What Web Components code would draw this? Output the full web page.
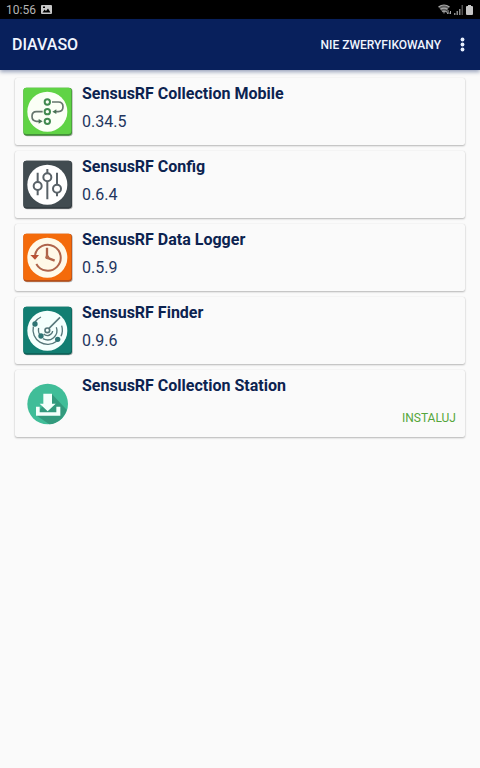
<!DOCTYPE html>
<html lang="pl">
<head>
<meta charset="utf-8">
<meta name="viewport" content="width=device-width, initial-scale=1">
<title>DIAVASO</title>
<style>
  body { margin: 0; background: #fafafa; color: #0c2350; font-family: Roboto, "Liberation Sans", sans-serif; }
</style>
</head>
<body>
<diavaso-app></diavaso-app>
<script>
const define = (name, html) => customElements.define(name, class extends HTMLElement {
  constructor() {
    super();
    this.attachShadow({ mode: "open" }).innerHTML = html;
  }
});

define("status-bar", `
<style>
  :host { display: flex; align-items: center; justify-content: space-between; height: 19px; padding: 0 7px 0 6px; background: #000; color: #b4b4b4; font-size: 12px; line-height: 20px; }
  div { display: flex; align-items: center; gap: 5px; }
  .right { gap: 2px; }
  svg { display: block; }
</style>
<div><time>10:56</time>
  <svg width="11" height="9" viewBox="0 0 11 9"><path fill="#c8c8c8" fill-rule="evenodd" d="M1 0h9q1 0 1 1v7q0 1-1 1H1Q0 9 0 8V1Q0 0 1 0ZM1.5 7.5h8L7 3.5 5 6 3.500 4.500ZM2 1.500v1.500h2V1.500Z"/></svg>
</div>
<div class="right">
  <svg width="14" height="11" viewBox="0 0 14 11"><path d="M.5 3Q6 -1 11.500 3L6 10Z" fill="#5c5c5c"/><path d="M.5 3Q6 -1 11.500 3M2.500 5.300Q6 2.800 9.500 5.300M4.300 7.600Q6 6.500 7.700 7.600" fill="none" stroke="#aaa" stroke-width="1.200"/><path d="M8 7l2 3V6M12.500 7v3l-1.500-1.500" fill="none" stroke="#aaa"/></svg>
  <svg width="10" height="10" viewBox="0 0 10 10"><path d="M0 8h1.500v2H0zM2.500 6H4v4H2.500zM5 4h1.500v6H5z" fill="#888"/><path d="M7.500 0H9v10H7.500z" fill="#505050"/></svg>
  <svg width="7" height="10" viewBox="0 0 7 10"><path d="M2 0h3v1h1q1 0 1 1v7q0 1-1 1H1Q0 10 0 9V2q0-1 1-1h1Z" fill="#c6c6c6"/></svg>
</div>`);

define("app-bar", `
<style>
  :host { display: flex; align-items: center; height: 51px; padding: 0 6px 0 12px; background: #08205c; color: #f0f5ff; box-shadow: 0 2px 4px #08205c66; }
  h1 { flex: 1; margin: 0; font-size: 16px; line-height: 24px; font-weight: 500; }
  button { display: block; padding: 0; border: 0; background: none; color: inherit; font: 500 12px/24px Roboto, "Liberation Sans", sans-serif; cursor: pointer; }
  .menu { margin-left: 9px; }
  svg { display: block; }
</style>
<h1><slot></slot></h1>
<button type="button">NIE ZWERYFIKOWANY</button>
<button type="button" class="menu" aria-label="Menu"><svg width="24" height="24" viewBox="0 0 24 24" fill="#e8f0ff"><circle cx="12.500" cy="6.500" r="1.900"/><circle cx="12.500" cy="11.500" r="1.900"/><circle cx="12.500" cy="16.500" r="1.900"/></svg></button>`);

const tile = (fill, edge, disc, art) => `
  <rect x="41" y="50" width="146" height="144" rx="10" fill="#777" opacity=".55"/>
  <rect x="39" y="48" width="146" height="144" rx="10" fill="${edge}"/>
  <rect x="39" y="48" width="144" height="139" rx="9" fill="${fill}"/>
  <circle cx="111" cy="120" r="60" fill="${disc}"/>${art}`;

const icons = {
  collection: tile("#60d345", "#438f39", "#fbfff6", `
    <g fill="none" stroke="#418a50" stroke-width="6"><circle cx="111" cy="91" r="8"/><circle cx="111" cy="120" r="8"/><circle cx="111" cy="149" r="8"/></g>
    <g fill="none" stroke="#66756d" stroke-width="5"><path d="M125 91h19q14 0 14 14t-14 15h-8M97 120H78q-13 0-13 14t13 15h9"/></g>
    <path d="m126 120 12-7v14ZM97 149l-12-7v14Z" fill="#477253"/>`),
  config: tile("#414b50", "#343d42", "#fff", `
    <g fill="none" stroke="#596268" stroke-width="6"><path d="M82 84v28m0 24v16M111 73v14m0 22v55M140 84v36m0 24v11"/><circle cx="82" cy="124" r="12"/><circle cx="111" cy="98" r="12"/><circle cx="140" cy="132" r="12"/></g>`),
  logger: tile("#f46b0b", "#b84f18", "#fff9e8", `
    <path d="M74 112a39 39 0 1 1 4 27" fill="none" stroke="#af644b" stroke-width="6"/>
    <path d="M60 112h26l-12 14Z" fill="#b95134"/>
    <path d="M110 90v30l23 9" fill="none" stroke="#af644b" stroke-width="7"/><circle cx="111" cy="119" r="6" fill="#b46b4d"/>`),
  finder: tile("#127e72", "#0d6259", "#f4fffd", `
    <g fill="none" stroke="#56777a" stroke-width="4"><path d="M69 108a44 44 0 0 0 70 44M152 137a44 44 0 0 0 2-32M74 94q7-10 18-15M85 112a28 28 0 0 0 6 24M98 144a28 28 0 0 0 40-34M100 130a16 16 0 0 0 27-9"/><circle cx="111" cy="119" r="7" stroke-width="5"/><path d="m116 113 33-33" stroke-width="5"/></g>
    <g fill="#2f7474"><circle cx="74" cy="100" r="8"/><circle cx="92" cy="136" r="8"/><circle cx="142" cy="146" r="8"/></g>`),
  download: `
    <circle cx="112" cy="121" r="61" fill="#40bd98"/>
    <path d="m124 90 45 48a61 61 0 0 1-52 44l-40-27Z" fill="#339a7d"/>
    <path d="M99 90h26v30h11l-24 23-24-23h11ZM77 129h11v17h50v-17h12v27H77Z" fill="#f4fffb"/>`
};

customElements.define("app-icon", class extends HTMLElement {
  connectedCallback() {
    if (this.shadowRoot) return;
    this.attachShadow({ mode: "open" }).innerHTML = `
      <style>:host { display: block; } svg { display: block; }</style>
      <svg width="50" height="50" viewBox="38 46 150 150" aria-hidden="true">${icons[this.getAttribute("name")]}</svg>`;
  }
});

define("app-card", `
<style>
  :host { display: flex; align-items: center; box-sizing: border-box; min-height: 67px; padding: 0 9px 0 8px; gap: 9px; background: #fafafa; border-radius: 2px; box-shadow: 0 1px 2px #0004, 0 0 1px #0002; }
  .text { flex: 1; align-self: stretch; padding-top: 4px; min-width: 0; }
  h2, p { margin: 0; font-size: 16px; }
  h2 { font-weight: 700; line-height: 24px; }
  p { line-height: 32px; color: #22355e; }
  .action { align-self: flex-end; padding-bottom: 7px; }
</style>
<slot name="icon"></slot>
<div class="text"><h2><slot></slot></h2><p><slot name="version"></slot></p></div>
<div class="action"><slot name="action"></slot></div>`);

define("install-button", `
<style>
  :host { display: block; }
  button { display: block; padding: 0; border: 0; background: none; color: #55a63b; font: 400 12px/24px Roboto, "Liberation Sans", sans-serif; cursor: pointer; }
</style>
<button type="button"><slot></slot></button>`);

define("diavaso-app", `
<style>
  :host { display: block; }
  main { display: grid; gap: 6px; padding: 8px 15px 16px; }
</style>
<status-bar></status-bar>
<app-bar>DIAVASO</app-bar>
<main>
  <app-card><app-icon slot="icon" name="collection"></app-icon>SensusRF Collection Mobile<span slot="version">0.34.5</span></app-card>
  <app-card><app-icon slot="icon" name="config"></app-icon>SensusRF Config<span slot="version">0.6.4</span></app-card>
  <app-card><app-icon slot="icon" name="logger"></app-icon>SensusRF Data Logger<span slot="version">0.5.9</span></app-card>
  <app-card><app-icon slot="icon" name="finder"></app-icon>SensusRF Finder<span slot="version">0.9.6</span></app-card>
  <app-card><app-icon slot="icon" name="download"></app-icon>SensusRF Collection Station<install-button slot="action">INSTALUJ</install-button></app-card>
</main>`);
</script>
</body>
</html>
